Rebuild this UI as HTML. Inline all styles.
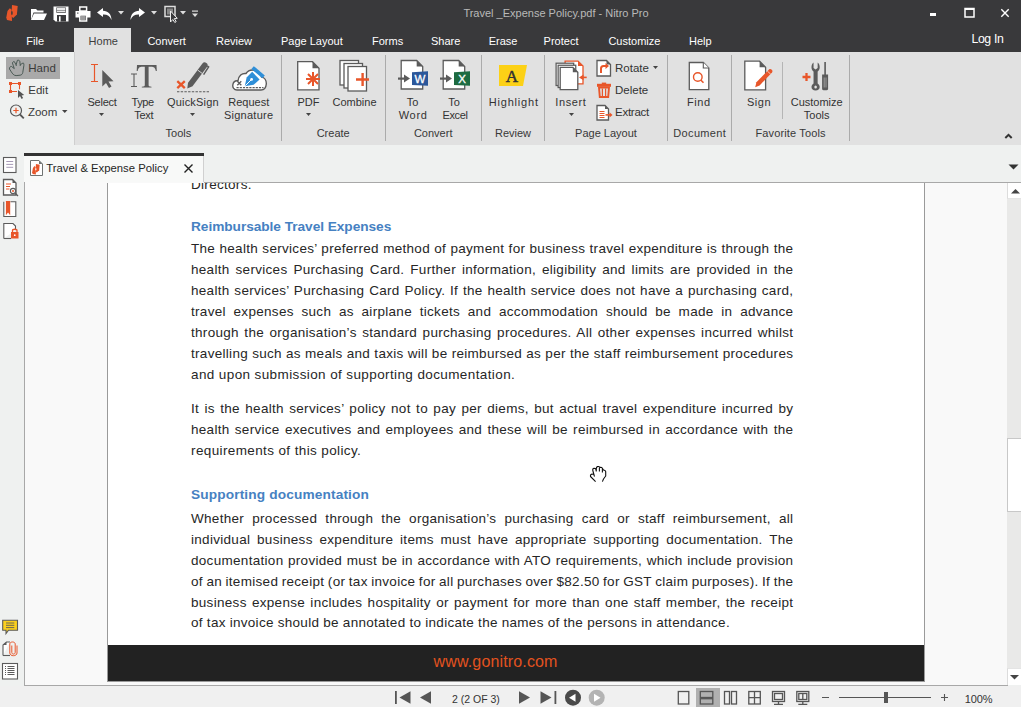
<!DOCTYPE html>
<html><head><meta charset="utf-8">
<style>
*{margin:0;padding:0;box-sizing:border-box}
html,body{width:1021px;height:707px;overflow:hidden}
body{position:relative;background:#eff1f0;font-family:"Liberation Sans",sans-serif;font-size:12px;color:#333}
.a{position:absolute}
.t{white-space:nowrap}
svg{overflow:visible}
</style></head><body>
<div class="a" style="left:0px;top:0px;width:1021px;height:52px;background:#39393b;"></div>
<div class="a t" style="left:406.00px;width:300px;text-align:center;top:7.09px;font-size:11px;line-height:13.2px;color:#b9b9b9;font-weight:normal;">Travel _Expense Policy.pdf - Nitro Pro</div>
<svg class="a" style="left:0px;top:0px;" width="22" height="24" viewBox="0 0 22 24"><path d="M12 5 L17.7 6 L16.9 14.5 L13.3 18 L11.3 16.5 Z" fill="#e8562a"/><path d="M9.8 8.2 L11.5 9.5 L12 21 L7 20 L6.3 17.5 L7.5 11 Z" fill="#e8562a"/><ellipse cx="11.9" cy="13" rx="0.8" ry="2" fill="#39393b"/></svg>
<svg class="a" style="left:30px;top:7px;" width="18" height="14" viewBox="0 0 18 14"><path d="M1 2 h5 l1.5 1.5 h6 v2 h-10 l-2.5 7.5 z" fill="#fff"/><path d="M4 6.5 h13 l-3 6.5 h-13 z" fill="#fff"/></svg>
<svg class="a" style="left:52.5px;top:5.8px;" width="16" height="16" viewBox="0 0 16 16"><path d="M0.5 0.5 H15.5 V15.5 H2.5 L0.5 13.5 Z" fill="#fff"/><rect x="3.3" y="1.5" width="9.6" height="5.2" fill="#39393b"/><rect x="3.8" y="2.1" width="8.6" height="1.8" fill="#fff"/><rect x="3.8" y="4.5" width="8.6" height="1.4" fill="#fff"/><rect x="4" y="9" width="9" height="6.5" fill="#39393b"/><rect x="6" y="10.3" width="1.6" height="5.2" fill="#fff"/></svg>
<svg class="a" style="left:74.5px;top:5.8px;" width="16" height="16" viewBox="0 0 16 16"><rect x="4.8" y="1" width="6.8" height="4" fill="#39393b" stroke="#fff" stroke-width="1.5"/><path d="M0.5 5 H15.5 V11.5 H0.5 Z" fill="#fff"/><rect x="2.2" y="6.5" width="1.2" height="1.2" fill="#39393b"/><rect x="4.8" y="9" width="6.8" height="6" fill="#39393b" stroke="#fff" stroke-width="1.5"/><path d="M6 11 H10.5 M6 13 H10.5" stroke="#fff" stroke-width="1"/></svg>
<svg class="a" style="left:96px;top:7px;" width="18" height="14" viewBox="0 0 18 14"><path d="M7 1 L1 5.5 L7 10 V7.5 C11 7.3 14 9 15.5 13 C15.5 7.5 12 3.8 7 3.8 Z" fill="#fff"/></svg>
<svg class="a" style="left:118px;top:11px;" width="7" height="4" viewBox="0 0 7 4"><path d="M0 0 h6 l-3 3.5 z" fill="#ddd"/></svg>
<svg class="a" style="left:128px;top:7px;" width="18" height="14" viewBox="0 0 18 14"><path d="M11 1 L17 5.5 L11 10 V7.5 C7 7.3 4 9 2.5 13 C2.5 7.5 6 3.8 11 3.8 Z" fill="#fff"/></svg>
<svg class="a" style="left:151px;top:11px;" width="7" height="4" viewBox="0 0 7 4"><path d="M0 0 h6 l-3 3.5 z" fill="#ddd"/></svg>
<svg class="a" style="left:164px;top:5px;" width="14" height="18" viewBox="0 0 14 18"><rect x="1" y="1.5" width="10" height="10" fill="none" stroke="#ddd" stroke-width="1.5"/><rect x="3" y="3.5" width="6" height="6" fill="#888"/><path d="M6.5 6 L6.5 17 L8.8 14.5 L10.8 17.5 L12.2 16.6 L10.3 13.6 L13.3 13.3 Z" fill="#39393b" stroke="#eee" stroke-width="1"/></svg>
<svg class="a" style="left:180px;top:11px;" width="7" height="4" viewBox="0 0 7 4"><path d="M0 0 h6 l-3 3.5 z" fill="#ddd"/></svg>
<svg class="a" style="left:192px;top:10px;" width="7" height="8" viewBox="0 0 7 8"><rect x="0" y="0.5" width="6" height="1.2" fill="#ddd"/><path d="M0 3.5 h6 l-3 3.5 z" fill="#ddd"/></svg>
<div class="a" style="left:930px;top:13px;width:6px;height:3px;background:#fff;"></div>
<svg class="a" style="left:964px;top:7px;" width="11" height="11" viewBox="0 0 11 11"><rect x="1" y="1.5" width="9" height="8.5" fill="none" stroke="#fff" stroke-width="1.5"/><rect x="1" y="1" width="9" height="2" fill="#fff"/></svg>
<svg class="a" style="left:1000px;top:8px;" width="10" height="10" viewBox="0 0 10 10"><path d="M1.3 1.3 L8.7 8.7 M8.7 1.3 L1.3 8.7" stroke="#fff" stroke-width="1.4"/></svg>
<div class="a" style="left:74px;top:28px;width:57px;height:24px;background:#e1e1e1;"></div>
<div class="a t" style="left:26.3px;top:34.79px;font-size:11px;line-height:13.2px;color:#ffffff;font-weight:normal;">File</div>
<div class="a t" style="left:88.6px;top:34.79px;font-size:11px;line-height:13.2px;color:#3d3d3d;font-weight:normal;">Home</div>
<div class="a t" style="left:147.4px;top:34.79px;font-size:11px;line-height:13.2px;color:#ffffff;font-weight:normal;">Convert</div>
<div class="a t" style="left:216px;top:34.79px;font-size:11px;line-height:13.2px;color:#ffffff;font-weight:normal;">Review</div>
<div class="a t" style="left:281px;top:34.79px;font-size:11px;line-height:13.2px;color:#ffffff;font-weight:normal;">Page Layout</div>
<div class="a t" style="left:372px;top:34.79px;font-size:11px;line-height:13.2px;color:#ffffff;font-weight:normal;">Forms</div>
<div class="a t" style="left:431px;top:34.79px;font-size:11px;line-height:13.2px;color:#ffffff;font-weight:normal;">Share</div>
<div class="a t" style="left:488.7px;top:34.79px;font-size:11px;line-height:13.2px;color:#ffffff;font-weight:normal;">Erase</div>
<div class="a t" style="left:543.6px;top:34.79px;font-size:11px;line-height:13.2px;color:#ffffff;font-weight:normal;">Protect</div>
<div class="a t" style="left:608.4px;top:34.79px;font-size:11px;line-height:13.2px;color:#ffffff;font-weight:normal;">Customize</div>
<div class="a t" style="left:689px;top:34.79px;font-size:11px;line-height:13.2px;color:#ffffff;font-weight:normal;">Help</div>
<div class="a t" style="left:971.4px;top:31.56px;font-size:12.3px;line-height:14.76px;color:#ffffff;font-weight:normal;letter-spacing:-0.35px;">Log In</div>
<div class="a" style="left:0px;top:52px;width:1021px;height:93px;background:#e1e1e1;"></div>
<div class="a" style="left:0px;top:52px;width:74px;height:93px;background:#eff1f0;"></div>
<div class="a" style="left:74px;top:52px;width:1px;height:93px;background:#cfcfcf;"></div>
<div class="a" style="left:0px;top:145px;width:1021px;height:8px;background:#eff1f0;"></div>
<div class="a" style="left:6px;top:57px;width:54px;height:22px;background:#a9a9a9;"></div>
<svg class="a" style="left:8px;top:59px;" width="18" height="19" viewBox="0 0 18 19"><path d="M8.1 16.6 C5.5 16.5 4.5 14.5 3.35 12.9 L1.5 10 C1.2 9 2.5 6.8 3.35 7.4 L6.3 9.6 L5.2 6.3 L4.45 4.1 C4.5 3 5.5 2.5 6.3 2.6 L8.1 5.8 L9.4 1.3 C10.5 1 11.5 1.5 11.8 2.25 L12.2 5.8 L15.1 3.9 C15.8 4 16 5.5 15.85 6.7 L14.75 13.6 C14.5 15 13.5 16 12.2 16.2 Z M8.1 5.8 L8.3 7 M12.2 5.8 L12.2 7" fill="none" stroke="#3f504b" stroke-width="0.9"/></svg>
<div class="a t" style="left:28.3px;top:61.62px;font-size:11.5px;line-height:13.8px;color:#3a3a3a;font-weight:normal;">Hand</div>
<svg class="a" style="left:8px;top:81px;" width="18" height="18" viewBox="0 0 18 18"><path d="M2.5 11 V2.5 H11.5 V8.3 M2.5 10.5 H9" fill="none" stroke="#e8562a" stroke-width="1.1"/><rect x="1" y="1" width="3" height="3" fill="#e8562a"/><rect x="10" y="1" width="3" height="3" fill="#e8562a"/><rect x="1" y="9" width="3" height="3" fill="#e8562a"/><path d="M10 9 L10 17 L12 15.1 L13.6 17.9 L15.1 17.1 L13.6 14.4 L16.2 14.1 Z" fill="#555"/></svg>
<div class="a t" style="left:28.3px;top:83.52px;font-size:11.5px;line-height:13.8px;color:#3a3a3a;font-weight:normal;">Edit</div>
<svg class="a" style="left:8px;top:103px;" width="18" height="18" viewBox="0 0 18 18"><circle cx="8" cy="7.5" r="5.5" fill="none" stroke="#555" stroke-width="1.2"/><path d="M12 11.5 L15.8 15.3" stroke="#555" stroke-width="1.8"/><path d="M8 4.8 V10.2 M5.3 7.5 H10.7" stroke="#e8562a" stroke-width="1.2"/></svg>
<div class="a t" style="left:27.9px;top:105.52px;font-size:11.5px;line-height:13.8px;color:#3a3a3a;font-weight:normal;">Zoom</div>
<svg class="a" style="left:62px;top:110px;" width="6" height="4" viewBox="0 0 6 4"><path d="M0 0 h5.5 l-2.75 3 z" fill="#444"/></svg>
<svg class="a" style="left:88px;top:62px;" width="28" height="28" viewBox="0 0 28 28"><path d="M3 2.5 H10 M3 19.5 H10 M6.5 2.5 V19.5" stroke="#e8562a" stroke-width="1.2"/><path d="M14.3 8 L14.3 24.5 L18 21 L21 26 L23.5 24.5 L20.5 19.6 L25.5 19.2 Z" fill="#5b5b5b"/></svg>
<div class="a t" style="left:-47.91px;width:300px;text-align:center;top:96.09px;font-size:11px;line-height:13.2px;color:#333333;font-weight:normal;letter-spacing:-0.22px;">Select</div>
<svg class="a" style="left:99px;top:112.5px;" width="6" height="4" viewBox="0 0 6 4"><path d="M0 0 h5 l-2.5 3 z" fill="#444"/></svg>
<svg class="a" style="left:128px;top:62px;" width="32" height="28" viewBox="0 0 32 28"><path d="M3 12 H9 M3 24.5 H9 M6 12 V24.5" stroke="#5b5b5b" stroke-width="1.1"/><path d="M9 3 H28.5 L28.8 9 H27.8 C27.2 5.5 26 4.7 23 4.7 H20.6 V23 C20.6 24.3 21.2 24.6 23.5 24.8 V25.5 H13.8 V24.8 C16.2 24.6 16.8 24.3 16.8 23 V4.7 H14.5 C11.5 4.7 10.3 5.5 9.7 9 H8.7 Z" fill="#5b5b5b"/></svg>
<div class="a t" style="left:-7.42px;width:300px;text-align:center;top:96.09px;font-size:11px;line-height:13.2px;color:#333333;font-weight:normal;letter-spacing:-0.45px;">Type</div>
<div class="a t" style="left:-6.26px;width:300px;text-align:center;top:108.99px;font-size:11px;line-height:13.2px;color:#333333;font-weight:normal;letter-spacing:-0.33px;">Text</div>
<svg class="a" style="left:174px;top:58px;" width="38" height="36" viewBox="0 0 38 36"><path d="M3.3 23.2 L10.8 30.2 M10.8 23.2 L3.3 30.2" stroke="#e8562a" stroke-width="2.3"/><path d="M3 33.8 H35" stroke="#5b5b5b" stroke-width="1.1" stroke-dasharray="2.4 1.3"/><path d="M13.3 30.5 L14.06 24.82 L28.46 5.62 A2.8 2.8 0 0 1 32.94 8.98 L18.54 28.18 Z" fill="#5b5b5b"/><path d="M23.66 12.02 L28.14 15.38" stroke="#e1e1e1" stroke-width="0.9"/><path d="M33.2 7.8 L34.6 8.9 L29.6 16.6" stroke="#5b5b5b" stroke-width="1.5" fill="none"/></svg>
<div class="a t" style="left:42.90px;width:300px;text-align:center;top:96.09px;font-size:11px;line-height:13.2px;color:#333333;font-weight:normal;letter-spacing:0.19px;">QuickSign</div>
<svg class="a" style="left:190px;top:112.5px;" width="6" height="4" viewBox="0 0 6 4"><path d="M0 0 h5 l-2.5 3 z" fill="#444"/></svg>
<svg class="a" style="left:231px;top:63px;" width="38" height="30" viewBox="0 0 38 30"><path d="M6 27 C3 27 1.5 24.5 1.8 22 C2.2 19 4.5 17.5 7 17.8 C7.5 12.5 11 10 15 10.5 C17 7.5 21 6.5 24.5 7.5 C28 8.5 30 11 30.5 14 C33.5 14.5 35.5 17.5 35.3 21 C35 24.5 33 27 30 27 Z" fill="#fff" stroke="#5b5b5b" stroke-width="1.4"/><path d="M6.3 18.3 L10.3 22.3 M10.3 18.3 L6.3 22.3" stroke="#5b5b5b" stroke-width="1.3"/><path d="M5.5 24.6 H32.5" stroke="#5b5b5b" stroke-width="1.1" stroke-dasharray="2.2 1"/><path d="M13.8 23.2 L15.6 14.6 L21.2 8.8 L28.6 16.4 L22.6 21.8 Z" fill="#2f8fd8"/><path d="M14.3 22.7 L20 17" stroke="#fff" stroke-width="1"/><circle cx="20.6" cy="16.4" r="1.4" fill="#fff"/><path d="M22.8 3.2 L33.8 12.4 L31.4 15.3 L20.4 6.1 Z" fill="#2f8fd8"/></svg>
<div class="a t" style="left:98.80px;width:300px;text-align:center;top:96.09px;font-size:11px;line-height:13.2px;color:#333333;font-weight:normal;">Request</div>
<div class="a t" style="left:98.62px;width:300px;text-align:center;top:108.99px;font-size:11px;line-height:13.2px;color:#333333;font-weight:normal;letter-spacing:0.25px;">Signature</div>
<div class="a t" style="left:28.40px;width:300px;text-align:center;top:127.19px;font-size:11px;line-height:13.2px;color:#383838;font-weight:normal;">Tools</div>
<div class="a" style="left:281px;top:55px;width:1px;height:86px;background:#ababab;"></div>
<svg class="a" style="left:295px;top:59px;" width="28" height="34" viewBox="0 0 28 34"><path d="M2.7 2.7 H17.5 L24.0 9.2 V30.9 H2.7 Z" fill="#fff" stroke="#5b5b5b" stroke-width="1.3"/><path d="M17.5 2.7 V9.2 H24.0 Z" fill="#5b5b5b"/><g stroke="#e8562a" stroke-width="2"><path d="M18 13 V27 M11 20 H25 M13 15 L23 25 M23 15 L13 25"/></g></svg>
<div class="a t" style="left:158.50px;width:300px;text-align:center;top:96.09px;font-size:11px;line-height:13.2px;color:#333333;font-weight:normal;">PDF</div>
<svg class="a" style="left:306px;top:112.5px;" width="6" height="4" viewBox="0 0 6 4"><path d="M0 0 h5 l-2.5 3 z" fill="#444"/></svg>
<svg class="a" style="left:337px;top:58px;" width="34" height="35" viewBox="0 0 34 35"><rect x="3" y="2.5" width="18.5" height="24.5" fill="#fff" stroke="#5b5b5b" stroke-width="1.3"/><rect x="7" y="5.5" width="18.5" height="24.5" fill="#fff" stroke="#5b5b5b" stroke-width="1.3"/><rect x="11" y="8.5" width="18.5" height="24.5" fill="#fff" stroke="#5b5b5b" stroke-width="1.3"/><path d="M25.6 15 V28 M19 21.5 H32" stroke="#e8562a" stroke-width="2.4"/></svg>
<div class="a t" style="left:204.50px;width:300px;text-align:center;top:96.09px;font-size:11px;line-height:13.2px;color:#333333;font-weight:normal;">Combine</div>
<div class="a t" style="left:183.20px;width:300px;text-align:center;top:127.19px;font-size:11px;line-height:13.2px;color:#383838;font-weight:normal;">Create</div>
<div class="a" style="left:385px;top:55px;width:1px;height:86px;background:#ababab;"></div>
<svg class="a" style="left:397px;top:58px;" width="32" height="33" viewBox="0 0 32 33"><path d="M4.2 2.5 H19.7 L25.7 8.5 V31.0 H4.2 Z" fill="#fff" stroke="#5b5b5b" stroke-width="1.3"/><path d="M19.7 2.5 V8.5 H25.7 Z" fill="#5b5b5b"/><path d="M1 20.6 H8" stroke="#5b5b5b" stroke-width="2.2"/><path d="M7 16.6 L13 20.6 L7 24.6 Z" fill="#5b5b5b"/><path d="M15 14.2 L31 13.2 V27.8 L15 27 Z" fill="#2b579a"/><text x="23" y="25" font-family="Liberation Sans" font-size="11.5" fill="#fff" stroke="#fff" stroke-width="0.3" text-anchor="middle">W</text></svg>
<div class="a t" style="left:262.50px;width:300px;text-align:center;top:96.09px;font-size:11px;line-height:13.2px;color:#333333;font-weight:normal;">To</div>
<div class="a t" style="left:263.15px;width:300px;text-align:center;top:108.99px;font-size:11px;line-height:13.2px;color:#333333;font-weight:normal;letter-spacing:0.7px;">Word</div>
<svg class="a" style="left:439px;top:58px;" width="32" height="33" viewBox="0 0 32 33"><path d="M4.2 2.5 H19.7 L25.7 8.5 V31.0 H4.2 Z" fill="#fff" stroke="#5b5b5b" stroke-width="1.3"/><path d="M19.7 2.5 V8.5 H25.7 Z" fill="#5b5b5b"/><path d="M1 20.6 H8" stroke="#5b5b5b" stroke-width="2.2"/><path d="M7 16.6 L13 20.6 L7 24.6 Z" fill="#5b5b5b"/><path d="M15 14.2 L31 13.2 V27.8 L15 27 Z" fill="#1d6b41"/><text x="23" y="25" font-family="Liberation Sans" font-size="11.5" fill="#fff" stroke="#fff" stroke-width="0.3" text-anchor="middle">X</text></svg>
<div class="a t" style="left:304.00px;width:300px;text-align:center;top:96.09px;font-size:11px;line-height:13.2px;color:#333333;font-weight:normal;">To</div>
<div class="a t" style="left:305.02px;width:300px;text-align:center;top:108.99px;font-size:11px;line-height:13.2px;color:#333333;font-weight:normal;letter-spacing:-0.35px;">Excel</div>
<div class="a t" style="left:283.20px;width:300px;text-align:center;top:127.19px;font-size:11px;line-height:13.2px;color:#383838;font-weight:normal;">Convert</div>
<div class="a" style="left:481px;top:55px;width:1px;height:86px;background:#ababab;"></div>
<svg class="a" style="left:498px;top:64px;" width="30" height="23" viewBox="0 0 30 23"><path d="M1 1 H29 L25 22 H1 Z" fill="#fcd116"/><text x="14" y="18" font-family="Liberation Serif" font-size="17" fill="#333" stroke="#333" stroke-width="0.5" text-anchor="middle">A</text></svg>
<div class="a t" style="left:363.80px;width:300px;text-align:center;top:96.09px;font-size:11px;line-height:13.2px;color:#333333;font-weight:normal;letter-spacing:0.8px;">Highlight</div>
<div class="a t" style="left:363.00px;width:300px;text-align:center;top:127.19px;font-size:11px;line-height:13.2px;color:#383838;font-weight:normal;">Review</div>
<div class="a" style="left:544px;top:55px;width:1px;height:86px;background:#ababab;"></div>
<svg class="a" style="left:554px;top:59px;" width="36" height="33" viewBox="0 0 36 33"><path d="M11.1 2.1 H24.0 L29.0 7.1 V24.8 H11.1 Z" fill="#fff" stroke="#e8562a" stroke-width="1.3"/><path d="M24.0 2.1 V7.1 H29.0 Z" fill="#e8562a"/><rect x="2.1" y="4.2" width="17.6" height="22.3" fill="#fff" stroke="#5b5b5b" stroke-width="1.25"/><rect x="4.15" y="6.25" width="17.6" height="22.3" fill="#fff" stroke="#5b5b5b" stroke-width="1.25"/><path d="M6.2 8.3 H18.8 L23.8 13.3 V30.6 H6.2 Z" fill="#fff" stroke="#5b5b5b" stroke-width="1.3"/><path d="M18.8 8.3 V13.3 H23.8 Z" fill="#5b5b5b"/><path d="M32.7 18.4 H27" stroke="#e8562a" stroke-width="1.6"/><path d="M25 18.4 L29.5 15.6 V21.2 Z" fill="#e8562a"/></svg>
<div class="a t" style="left:420.90px;width:300px;text-align:center;top:96.09px;font-size:11px;line-height:13.2px;color:#333333;font-weight:normal;letter-spacing:0.6px;">Insert</div>
<svg class="a" style="left:569px;top:112.5px;" width="6" height="4" viewBox="0 0 6 4"><path d="M0 0 h5 l-2.5 3 z" fill="#444"/></svg>
<svg class="a" style="left:595px;top:59px;" width="18" height="18" viewBox="0 0 18 18"><path d="M2 1.5 H11.5 L15.5 5.5 V17.0 H2 Z" fill="#fff" stroke="#5b5b5b" stroke-width="1.3"/><path d="M11.5 1.5 V5.5 H15.5 Z" fill="#5b5b5b"/><path d="M6 14 V9.5 C6 8 7 7 8.5 7 H11.5" fill="none" stroke="#e8562a" stroke-width="2"/><path d="M10.5 4 L14 7 L10.5 10 Z" fill="#e8562a"/></svg>
<div class="a t" style="left:615.0px;top:62.02px;font-size:11.5px;line-height:13.8px;color:#333333;font-weight:normal;">Rotate</div>
<svg class="a" style="left:653px;top:66px;" width="6" height="4" viewBox="0 0 6 4"><path d="M0 0 h5 l-2.5 3 z" fill="#444"/></svg>
<svg class="a" style="left:595px;top:81px;" width="18" height="18" viewBox="0 0 18 18"><rect x="2" y="2.8" width="14" height="3" fill="#e8562a"/><rect x="6.8" y="1.6" width="4.4" height="1.5" fill="#e8562a"/><path d="M4 6.5 H14 L13.2 16 H4.8 Z" fill="none" stroke="#e8562a" stroke-width="1.9"/><path d="M7.4 7.5 V15 M10.6 7.5 V15" stroke="#e8562a" stroke-width="1.2"/></svg>
<div class="a t" style="left:615.0px;top:83.92px;font-size:11.5px;line-height:13.8px;color:#333333;font-weight:normal;">Delete</div>
<svg class="a" style="left:595px;top:104px;" width="19" height="17" viewBox="0 0 19 17"><path d="M2 1.5 H10.0 L13.5 5.0 V16.0 H2 Z" fill="#fff" stroke="#5b5b5b" stroke-width="1.3"/><path d="M10.0 1.5 V5.0 H13.5 Z" fill="#5b5b5b"/><path d="M4.5 7.5 H9.5 M4.5 9.5 H9.5 M4.5 11.5 H9.5 M4.5 13.5 H9.5" stroke="#e8562a" stroke-width="1"/><path d="M10.5 10.9 H15.5" stroke="#e8562a" stroke-width="1.6"/><path d="M14.5 8.2 L17.5 10.9 L14.5 13.6 Z" fill="#e8562a"/></svg>
<div class="a t" style="left:615.0px;top:105.72px;font-size:11.5px;line-height:13.8px;color:#333333;font-weight:normal;letter-spacing:-0.25px;">Extract</div>
<div class="a t" style="left:456.00px;width:300px;text-align:center;top:127.19px;font-size:11px;line-height:13.2px;color:#383838;font-weight:normal;">Page Layout</div>
<div class="a" style="left:667px;top:55px;width:1px;height:86px;background:#ababab;"></div>
<svg class="a" style="left:686px;top:60px;" width="26" height="32" viewBox="0 0 26 32"><path d="M3.3 2.5 H17.3 L22.8 8.0 V29.7 H3.3 Z" fill="#fff" stroke="#5b5b5b" stroke-width="1.3"/><path d="M17.3 2.5 V8.0 H22.8 Z" fill="#fff"/><path d="M17.3 2.5 V8 H22.8" fill="none" stroke="#5b5b5b" stroke-width="1.1"/><circle cx="11.8" cy="17" r="4.3" fill="none" stroke="#e8562a" stroke-width="1.4"/><path d="M14.8 20 L17.5 22.7" stroke="#e8562a" stroke-width="1.6"/></svg>
<div class="a t" style="left:548.88px;width:300px;text-align:center;top:96.09px;font-size:11px;line-height:13.2px;color:#333333;font-weight:normal;letter-spacing:0.57px;">Find</div>
<div class="a t" style="left:549.77px;width:300px;text-align:center;top:127.19px;font-size:11px;line-height:13.2px;color:#383838;font-weight:normal;letter-spacing:0.34px;">Document</div>
<div class="a" style="left:731px;top:55px;width:1px;height:86px;background:#ababab;"></div>
<svg class="a" style="left:742px;top:59px;" width="34" height="33" viewBox="0 0 34 33"><path d="M2.8 2.2 H17.6 L23.6 8.2 V30.8 H2.8 Z" fill="#fff" stroke="#5b5b5b" stroke-width="1.3"/><path d="M17.6 2.2 V8.2 H23.6 Z" fill="#5b5b5b"/><path d="M13.2 28.3 L14.4 23.2 L27 10.6 C28.6 9 31.6 11.6 30 13.4 L17.6 26.4 Z" fill="#e8562a"/><path d="M25.6 12.2 L28.3 14.9" stroke="#fff" stroke-width="0.7"/></svg>
<div class="a t" style="left:609.08px;width:300px;text-align:center;top:96.09px;font-size:11px;line-height:13.2px;color:#333333;font-weight:normal;letter-spacing:0.57px;">Sign</div>
<div class="a" style="left:782px;top:62px;width:1px;height:57px;background:#b5b5b5;"></div>
<svg class="a" style="left:800px;top:60px;" width="32" height="32" viewBox="0 0 32 32"><path d="M2.5 17 H10.5 M6.5 13 V21" stroke="#e8562a" stroke-width="2.3"/><g transform="translate(15.6,0) scale(0.82,1) translate(-17,0)"><path d="M14.5 2.5 V8 L17 9.5 L19.5 8 V2.5 C21.5 3.5 22 5.5 22 7.5 C22 9.5 20.5 11 19.5 11.5 V23.5 C21 24.2 22 25.5 22 27 C22 29 20 30.5 17 30.5 C14 30.5 12 29 12 27 C12 25.5 13 24.2 14.5 23.5 V11.5 C13.5 11 12 9.5 12 7.5 C12 5.5 12.5 3.5 14.5 2.5 Z" fill="#5b5b5b"/><circle cx="17" cy="27" r="1.6" fill="#e1e1e1"/></g><path d="M25.1 2 V15" stroke="#5b5b5b" stroke-width="1.6"/><path d="M22.1 14.5 H28.1 V28.8 C28.1 29.8 27.3 30.3 25.1 30.3 C22.9 30.3 22.1 29.8 22.1 28.8 Z" fill="#5b5b5b"/><path d="M24.2 17.5 V27.5 M26 17.5 V27.5" stroke="#e1e1e1" stroke-width="0.5"/></svg>
<div class="a t" style="left:666.70px;width:300px;text-align:center;top:96.09px;font-size:11px;line-height:13.2px;color:#333333;font-weight:normal;">Customize</div>
<div class="a t" style="left:666.70px;width:300px;text-align:center;top:108.99px;font-size:11px;line-height:13.2px;color:#333333;font-weight:normal;">Tools</div>
<div class="a t" style="left:640.58px;width:300px;text-align:center;top:127.19px;font-size:11px;line-height:13.2px;color:#383838;font-weight:normal;letter-spacing:0.15px;">Favorite Tools</div>
<div class="a" style="left:849px;top:55px;width:1px;height:86px;background:#ababab;"></div>
<svg class="a" style="left:1003px;top:132px;" width="10" height="8" viewBox="0 0 10 8"><path d="M2.3 6 L5.5 2.8 L8.7 6" fill="none" stroke="#333" stroke-width="2"/></svg>
<div class="a" style="left:24px;top:153px;width:180px;height:3px;background:#333333;"></div>
<div class="a" style="left:24px;top:156px;width:180px;height:27px;background:#f8f9f8;"></div>
<div class="a" style="left:203px;top:156px;width:1px;height:27px;background:#d0d0d0;"></div>
<svg class="a" style="left:29px;top:159px;" width="16" height="18" viewBox="0 0 16 18"><path d="M1.5 1.5 H10 L13.5 5 V16.5 H1.5 Z" fill="#fff" stroke="#6f7372" stroke-width="1"/><path d="M10 1.5 V5 H13.5 Z" fill="#6f7372"/><g transform="translate(-1,1.7) scale(0.66)"><path d="M12 5 L17.7 6 L16.9 14.5 L13.3 18 L11.3 16.5 Z" fill="#e8562a"/><path d="M9.8 8.2 L11.5 9.5 L12 21 L7 20 L6.3 17.5 L7.5 11 Z" fill="#e8562a"/><ellipse cx="11.9" cy="13" rx="0.8" ry="2" fill="#fff"/></g></svg>
<div class="a t" style="left:46.3px;top:162.20px;font-size:11.3px;line-height:13.56px;color:#262626;font-weight:normal;">Travel &amp; Expense Policy</div>
<svg class="a" style="left:183px;top:163px;" width="11" height="11" viewBox="0 0 11 11"><path d="M1.5 1.5 L9.5 9.5 M9.5 1.5 L1.5 9.5" stroke="#222" stroke-width="1.4"/></svg>
<svg class="a" style="left:1008px;top:164px;" width="11" height="7" viewBox="0 0 11 7"><path d="M0.5 0.5 H10.5 L5.5 5.5 Z" fill="#333"/></svg>
<svg class="a" style="left:2px;top:156px;" width="17" height="18" viewBox="0 0 17 18"><rect x="1.5" y="1.5" width="12.5" height="15" fill="#fff" stroke="#5b5b5b" stroke-width="1.1"/><path d="M4.3 5.5 H11.2 M4.3 8.4 H11.2 M4.3 11.3 H11.2" stroke="#9d8fae" stroke-width="0.9"/></svg>
<svg class="a" style="left:2px;top:178px;" width="18" height="19" viewBox="0 0 18 19"><path d="M1.5 1.5 H10.5 L14.0 5.0 V17.0 H1.5 Z" fill="#fff" stroke="#5b5b5b" stroke-width="1.3"/><path d="M10.5 1.5 V5.0 H14.0 Z" fill="#5b5b5b"/><path d="M4 6 H9 M4 8.5 H8 M4 11 H7.5" stroke="#e8562a" stroke-width="1"/><circle cx="11" cy="13" r="2.6" fill="#fff" stroke="#5b5b5b" stroke-width="1.1"/><circle cx="11" cy="13" r="1" fill="#e8562a"/><path d="M13 15 L16 18" stroke="#5b5b5b" stroke-width="1.2"/></svg>
<svg class="a" style="left:2px;top:200px;" width="17" height="18" viewBox="0 0 17 18"><path d="M8.5 1.8 H13.8 V16.5 H1.8 V1.8" fill="#fff" stroke="#5b5b5b" stroke-width="1.1"/><path d="M3.9 1 H8.2 V15.2 L6.05 12.4 L3.9 15.2 Z" fill="#e8562a"/></svg>
<svg class="a" style="left:2px;top:222px;" width="18" height="18" viewBox="0 0 18 18"><path d="M1.8 16.5 V1.5 H11 L13.5 4 V8" fill="#fff" stroke="#5b5b5b" stroke-width="1.1"/><path d="M1.8 16.5 H9" stroke="#5b5b5b" stroke-width="1.1"/><rect x="9" y="10" width="7.5" height="6.5" fill="#e8562a"/><path d="M10.5 10.5 V8.5 C10.5 6.8 15 6.8 15 8.5 V10.5" fill="none" stroke="#e8562a" stroke-width="1.3"/><circle cx="12.75" cy="13.2" r="0.9" fill="#fff"/></svg>
<svg class="a" style="left:1px;top:619px;" width="18" height="16" viewBox="0 0 18 16"><path d="M1.7 1.2 H16.5 V11.2 H7.5 L5 14.5 V11.2 H1.7 Z" fill="#fbd01e" stroke="#5b5b5b" stroke-width="1.1"/><path d="M5 4 H13.3 M5 6.3 H13.3 M5 8.6 H13.3" stroke="#5b5b5b" stroke-width="0.9"/></svg>
<svg class="a" style="left:1px;top:640px;" width="18" height="17" viewBox="0 0 18 17"><path d="M2 15.5 V5 L5.5 2 H9" fill="#fff" stroke="#5b5b5b" stroke-width="1.1"/><path d="M2 5 L5.5 2 V5 Z" fill="#5b5b5b"/><path d="M2 15.5 H9" stroke="#5b5b5b" stroke-width="1.1"/><path d="M10.8 5.5 V12.5 C10.8 14.6 14.2 14.6 14.2 12.5 V4 C14.2 1.3 8.8 1.3 8.8 4 V13 C8.8 16.6 16 16.6 16 13 V5.5" fill="none" stroke="#e8562a" stroke-width="1"/></svg>
<svg class="a" style="left:1px;top:662px;" width="18" height="18" viewBox="0 0 18 18"><rect x="1.5" y="1.5" width="15" height="15.5" fill="#fff" stroke="#5b5b5b" stroke-width="1.1"/><path d="M4 4.5 H5 M4 6.5 H5 M4 8.5 H5 M4 10.5 H5 M4 12.5 H5 M6.5 4.5 H13.5 M6.5 6.5 H13.5 M6.5 8.5 H13.5 M6.5 10.5 H13.5 M6.5 12.5 H13.5" stroke="#5b5b5b" stroke-width="1"/></svg>
<div class="a" style="left:24px;top:182px;width:984px;height:504px;background:#f9f9f9;border-left:1px solid #a8a8a8;border-bottom:1px solid #a8a8a8;box-sizing:border-box"></div>
<div class="a" style="left:204px;top:182px;width:817px;height:1px;background:#a8a8a8;"></div>
<div class="a" style="left:107px;top:183px;width:1px;height:499px;background:#9a9a9a;"></div>
<div class="a" style="left:924px;top:183px;width:1px;height:499px;background:#9a9a9a;"></div>
<div class="a" style="left:108px;top:183px;width:816px;height:462px;background:#ffffff;"></div>
<div class="a" style="left:108px;top:645px;width:816px;height:36px;background:#222222;"></div>
<div class="a" style="left:107px;top:681px;width:818px;height:1px;background:#9a9a9a;"></div>
<div class="a t" style="left:345.57px;width:300px;text-align:center;top:652.06px;font-size:16px;line-height:19.2px;color:#e3521f;font-weight:normal;letter-spacing:0.15px;">www.gonitro.com</div>
<div class="a" style="left:1007px;top:183px;width:14px;height:502px;background:#e9e9e8;"></div>
<div class="a" style="left:1007px;top:183px;width:14px;height:16px;background:#ffffff;border-left:1px solid #dcdcdc;border-bottom:1px solid #e4e4e4"></div>
<svg class="a" style="left:1010px;top:188px;" width="11" height="7" viewBox="0 0 11 7"><path d="M1 5.5 H10 L5.5 1 Z" fill="#444"/></svg>
<div class="a" style="left:1007px;top:438px;width:14px;height:74px;background:#ffffff;border:1px solid #c8c8c8;border-right:none;box-sizing:border-box"></div>
<div class="a" style="left:1007px;top:668px;width:14px;height:17px;background:#ffffff;border-left:1px solid #dcdcdc;border-top:1px solid #e4e4e4"></div>
<svg class="a" style="left:1009px;top:674px;" width="11" height="7" viewBox="0 0 11 7"><path d="M1 1 H10 L5.5 5.5 Z" fill="#444"/></svg>
<div class="a" style="left:108px;top:183px;width:816px;height:462px;overflow:hidden">
<div class="a" style="left:-108px;top:-183px;width:1021px;height:707px">
<div class="a" style="left:191px;top:173.82px;font-size:13.5px;line-height:21px;color:#262626;font-weight:normal;white-space:nowrap;letter-spacing:0.3px;">Directors.</div>
<div class="a" style="left:191px;top:215.65px;font-size:13.7px;line-height:21px;color:#4681c2;font-weight:bold;white-space:nowrap;letter-spacing:-0.05px;">Reimbursable Travel Expenses</div>
<div class="a" style="left:191px;top:238.32px;font-size:13.5px;line-height:21px;color:#262626;font-weight:normal;white-space:nowrap;letter-spacing:0.3px;word-spacing:0.249px;">The health services’ preferred method of payment for business travel expenditure is through the</div>
<div class="a" style="left:191px;top:259.32px;font-size:13.5px;line-height:21px;color:#262626;font-weight:normal;white-space:nowrap;letter-spacing:0.3px;word-spacing:1.895px;">health services Purchasing Card. Further information, eligibility and limits are provided in the</div>
<div class="a" style="left:191px;top:280.32px;font-size:13.5px;line-height:21px;color:#262626;font-weight:normal;white-space:nowrap;letter-spacing:0.3px;word-spacing:0.731px;">health services’ Purchasing Card Policy. If the health service does not have a purchasing card,</div>
<div class="a" style="left:191px;top:301.32px;font-size:13.5px;line-height:21px;color:#262626;font-weight:normal;white-space:nowrap;letter-spacing:0.3px;word-spacing:3.690px;">travel expenses such as airplane tickets and accommodation should be made in advance</div>
<div class="a" style="left:191px;top:322.32px;font-size:13.5px;line-height:21px;color:#262626;font-weight:normal;white-space:nowrap;letter-spacing:0.3px;word-spacing:1.405px;">through the organisation’s standard purchasing procedures. All other expenses incurred whilst</div>
<div class="a" style="left:191px;top:343.32px;font-size:13.5px;line-height:21px;color:#262626;font-weight:normal;white-space:nowrap;letter-spacing:0.3px;word-spacing:0.108px;">travelling such as meals and taxis will be reimbursed as per the staff reimbursement procedures</div>
<div class="a" style="left:191px;top:364.32px;font-size:13.5px;line-height:21px;color:#262626;font-weight:normal;white-space:nowrap;letter-spacing:0.39px;">and upon submission of supporting documentation.</div>
<div class="a" style="left:191px;top:398.32px;font-size:13.5px;line-height:21px;color:#262626;font-weight:normal;white-space:nowrap;letter-spacing:0.3px;word-spacing:1.338px;">It is the health services’ policy not to pay per diems, but actual travel expenditure incurred by</div>
<div class="a" style="left:191px;top:419.32px;font-size:13.5px;line-height:21px;color:#262626;font-weight:normal;white-space:nowrap;letter-spacing:0.3px;word-spacing:1.169px;">health service executives and employees and these will be reimbursed in accordance with the</div>
<div class="a" style="left:191px;top:440.32px;font-size:13.5px;line-height:21px;color:#262626;font-weight:normal;white-space:nowrap;letter-spacing:0.38px;">requirements of this policy.</div>
<div class="a" style="left:191px;top:484.05px;font-size:13.7px;line-height:21px;color:#4681c2;font-weight:bold;white-space:nowrap;letter-spacing:0.13px;">Supporting documentation</div>
<div class="a" style="left:191px;top:507.82px;font-size:13.5px;line-height:21px;color:#262626;font-weight:normal;white-space:nowrap;letter-spacing:0.3px;word-spacing:4.061px;">Whether processed through the organisation’s purchasing card or staff reimbursement, all</div>
<div class="a" style="left:191px;top:528.82px;font-size:13.5px;line-height:21px;color:#262626;font-weight:normal;white-space:nowrap;letter-spacing:0.3px;word-spacing:2.697px;">individual business expenditure items must have appropriate supporting documentation. The</div>
<div class="a" style="left:191px;top:549.82px;font-size:13.5px;line-height:21px;color:#262626;font-weight:normal;white-space:nowrap;letter-spacing:0.3px;word-spacing:0.472px;">documentation provided must be in accordance with ATO requirements, which include provision</div>
<div class="a" style="left:191px;top:570.82px;font-size:13.5px;line-height:21px;color:#262626;font-weight:normal;white-space:nowrap;letter-spacing:0.3px;word-spacing:-0.528px;">of an itemised receipt (or tax invoice for all purchases over $82.50 for GST claim purposes). If the</div>
<div class="a" style="left:191px;top:592.22px;font-size:13.5px;line-height:21px;color:#262626;font-weight:normal;white-space:nowrap;letter-spacing:0.3px;word-spacing:1.223px;">business expense includes hospitality or payment for more than one staff member, the receipt</div>
<div class="a" style="left:191px;top:611.82px;font-size:13.5px;line-height:21px;color:#262626;font-weight:normal;white-space:nowrap;letter-spacing:0.28px;">of tax invoice should be annotated to indicate the names of the persons in attendance.</div>
</div></div>
<svg class="a" style="left:585px;top:460px;" width="25" height="25" viewBox="0 0 25 25"><path d="M10.6 21.6 L5.5 16.5 L5.5 15 L7 14 L9 14.5 L9.3 16.2 L8.5 13 L7.8 10.5 L7.8 9 L9 8.2 L10.5 8.5 L11.2 10 L11.5 7.5 L12.5 6.5 L14 6.5 L14.8 7.5 L15.5 7.3 L16.8 7.5 L17.5 8.5 L18.5 10 L20 10.5 L20.7 11.5 L20.7 16 L18.5 19 L17.4 21.6" fill="#fff" stroke="#111" stroke-width="1.1" stroke-linejoin="round"/><path d="M11.2 9.5 V11.5 M14.4 7.5 V11.5 M17.4 8.5 V12.5" stroke="#111" stroke-width="1.1"/></svg>
<div class="a" style="left:0px;top:686px;width:1021px;height:21px;background:#f0f0f0;"></div>
<svg class="a" style="left:394px;top:690px;" width="18" height="15" viewBox="0 0 18 15"><rect x="1" y="1" width="1.8" height="13" fill="#555"/><path d="M5.5 7.5 L16.5 1.2 V13.8 Z" fill="#555"/></svg>
<svg class="a" style="left:419px;top:690px;" width="13" height="15" viewBox="0 0 13 15"><path d="M1 7.5 L12 1.2 V13.8 Z" fill="#555"/></svg>
<div class="a t" style="left:452px;top:692.66px;font-size:10.5px;line-height:12.6px;color:#333;font-weight:normal;">2 (2 OF 3)</div>
<svg class="a" style="left:518px;top:690px;" width="13" height="15" viewBox="0 0 13 15"><path d="M12 7.5 L1 1.2 V13.8 Z" fill="#555"/></svg>
<svg class="a" style="left:539px;top:690px;" width="19" height="15" viewBox="0 0 19 15"><path d="M12.5 7.5 L1.5 1.2 V13.8 Z" fill="#555"/><rect x="15.5" y="1" width="1.8" height="13" fill="#555"/></svg>
<svg class="a" style="left:564px;top:689px;" width="18" height="18" viewBox="0 0 18 18"><circle cx="9" cy="8.7" r="8" fill="#4a4a4a"/><path d="M5 8.7 L11.5 4.7 V12.7 Z" fill="#fff"/></svg>
<svg class="a" style="left:588px;top:689px;" width="18" height="18" viewBox="0 0 18 18"><circle cx="8.7" cy="8.7" r="8" fill="#b3b3b3"/><path d="M12.5 8.7 L6 4.7 V12.7 Z" fill="#fff"/></svg>
<div class="a" style="left:696px;top:688px;width:24px;height:19px;background:#b0b0b0;"></div>
<svg class="a" style="left:676px;top:689px;" width="150" height="18" viewBox="0 0 150 18"><g fill="none" stroke="#555" stroke-width="1.3"><rect x="2.3" y="2.5" width="10.5" height="12.5"/><rect x="24.3" y="2.5" width="12.5" height="6"/><rect x="24.3" y="9.7" width="12.5" height="5.3"/><rect x="48.5" y="2.5" width="5" height="12.5"/><rect x="55.5" y="2.5" width="5" height="12.5"/><rect x="72.8" y="2.5" width="11.5" height="12.5"/><path d="M78.5 2.5 V15 M72.8 8.7 H84.3"/><rect x="96.5" y="2.5" width="12" height="10"/><rect x="98.5" y="4.5" width="8" height="6"/><path d="M98 15.3 H107 M102.5 12.5 V15.3"/><rect x="120.8" y="2.5" width="12" height="10"/><rect x="122.8" y="4.5" width="8" height="6"/><path d="M126.8 4.5 V10.5 M122.3 15.3 H131.3 M126.8 12.5 V15.3"/></g></svg>
<div class="a" style="left:822px;top:697px;width:7px;height:1px;background:#555;"></div>
<div class="a" style="left:839px;top:697px;width:92px;height:1px;background:#555;"></div>
<div class="a" style="left:884px;top:692px;width:4px;height:11px;background:#555;"></div>
<svg class="a" style="left:940px;top:692px;" width="10" height="11" viewBox="0 0 10 11"><path d="M4.5 2 V9 M1 5.5 H8" stroke="#555" stroke-width="1.1"/></svg>
<div class="a t" style="left:964.8px;top:693.19px;font-size:11px;line-height:13.2px;color:#333;font-weight:normal;letter-spacing:-0.15px;">100%</div>
</body></html>
